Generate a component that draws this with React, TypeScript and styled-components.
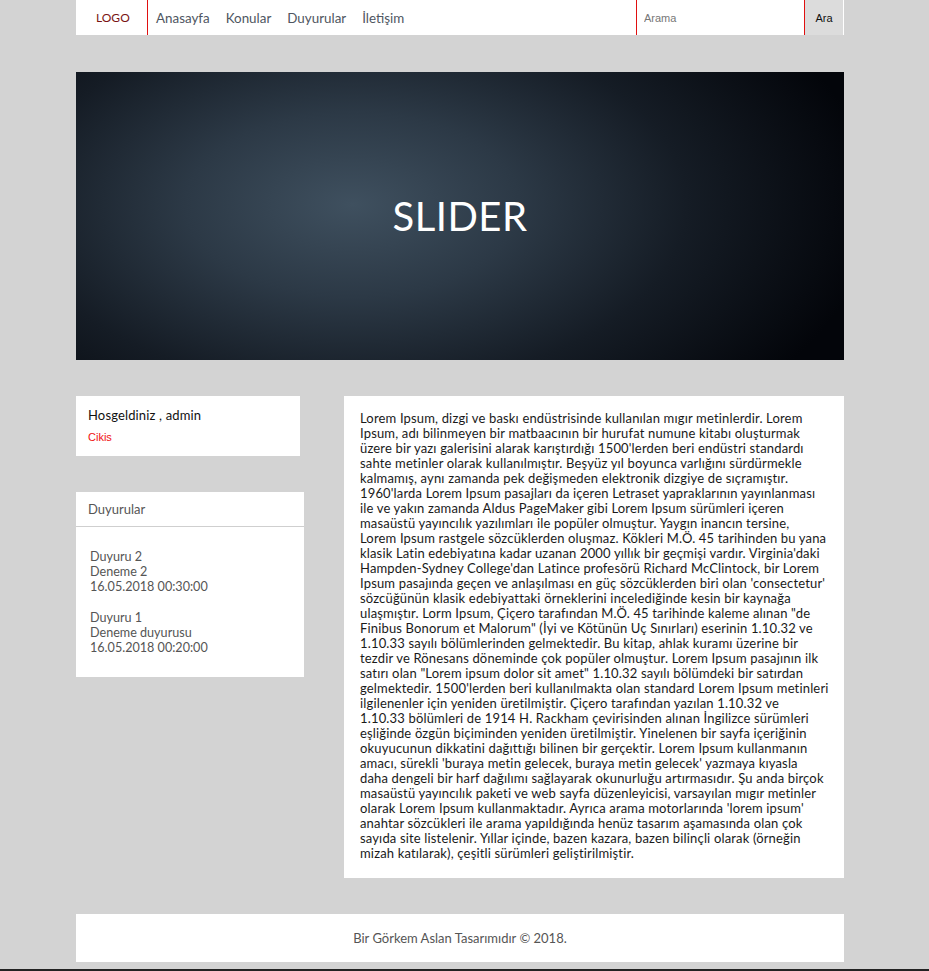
import React from "react";
import styled, { createGlobalStyle } from "styled-components";

const GlobalStyle = createGlobalStyle`
  html, body { margin: 0; padding: 0; }
  body {
    background: #d3d3d3;
    font-family: Lato, "Noto Sans", sans-serif;
    border-bottom: 2px solid #222;
  }
`;

const Page = styled.div`
  width: 768px;
  margin-left: 76px;
  display: flex;
  flex-direction: column;
  padding-bottom: 7px;
`;

const NavBar = styled.nav`
  height: 35px;
  background: #fff;
  display: flex;
  align-items: stretch;
`;

const Logo = styled.div`
  width: 72px;
  border-right: 1px solid #e01010;
  display: flex;
  align-items: center;
  padding-left: 20px;
  box-sizing: border-box;
  color: #7a1414;
  font-size: 12px;
`;

const Menu = styled.ul`
  list-style: none;
  margin: 0;
  padding: 0 0 0 8px;
  display: flex;
  align-items: center;
  gap: 16px;
  flex: 1;
`;

const MenuItem = styled.li`
  font-size: 13.4px;
  color: #4f5661;
`;

const SearchInput = styled.input`
  width: 169px;
  box-sizing: border-box;
  border: none;
  border-left: 1px solid #e01010;
  border-right: 1px solid #e01010;
  padding: 0 7px;
  font-family: "Liberation Sans", Arial, sans-serif;
  font-size: 11px;
  outline: none;
  &::placeholder { color: #777; }
`;

const SearchButton = styled.button`
  width: 39px;
  border: none;
  border-right: 1px solid #fff;
  background: #dcdcdc;
  font-family: "Liberation Sans", Arial, sans-serif;
  font-size: 11px;
  color: #111;
  padding: 0;
`;

const Slider = styled.div`
  margin-top: 37px;
  height: 288px;
  background: radial-gradient(ellipse 68% 100% at 36% 46%, #3f505f 0%, #2c3946 32%, #151c25 64%, #03050a 100%);
  display: flex;
  align-items: center;
  justify-content: center;
  color: #fff;
  font-size: 40px;
  letter-spacing: 0.5px;
`;

const Row = styled.div`
  margin-top: 36px;
  display: flex;
  align-items: flex-start;
  gap: 40px;
`;

const Sidebar = styled.aside`
  width: 228px;
  display: flex;
  flex-direction: column;
  gap: 36px;
`;

const WelcomeBox = styled.div`
  width: 224px;
  height: 60px;
  box-sizing: border-box;
  background: #fff;
  padding: 11px 12px;
`;

const WelcomeText = styled.div`
  font-size: 13px;
  color: #111;
  line-height: 16px;
  letter-spacing: 0.15px;
`;

const Logout = styled.a`
  display: block;
  margin-top: 8px;
  font-family: "Liberation Sans", Arial, sans-serif;
  font-size: 11px;
  color: #f01010;
  text-decoration: none;
`;

const Panel = styled.div`
  background: #fff;
`;

const PanelHeader = styled.div`
  height: 35px;
  box-sizing: border-box;
  border-bottom: 1px solid #cfcfcf;
  padding-left: 12px;
  display: flex;
  align-items: center;
  font-size: 13px;
  color: #555;
`;

const PanelBody = styled.div`
  padding: 22px 14px 22px;
  display: flex;
  flex-direction: column;
  gap: 16px;
`;

const NewsItem = styled.div`
  font-size: 12.6px;
  line-height: 15px;
  color: #555;
`;

const Content = styled.main`
  width: 500px;
  box-sizing: border-box;
  background: #fff;
  padding: 15px 16px 17px;
  font-size: 13px;
  line-height: 15px;
  letter-spacing: 0.16px;
  color: #1a1a1a;
  white-space: nowrap;
`;

const lines = [
  "Lorem Ipsum, dizgi ve baskı endüstrisinde kullanılan mıgır metinlerdir. Lorem",
  "Ipsum, adı bilinmeyen bir matbaacının bir hurufat numune kitabı oluşturmak",
  "üzere bir yazı galerisini alarak karıştırdığı 1500'lerden beri endüstri standardı",
  "sahte metinler olarak kullanılmıştır. Beşyüz yıl boyunca varlığını sürdürmekle",
  "kalmamış, aynı zamanda pek değişmeden elektronik dizgiye de sıçramıştır.",
  "1960'larda Lorem Ipsum pasajları da içeren Letraset yapraklarının yayınlanması",
  "ile ve yakın zamanda Aldus PageMaker gibi Lorem Ipsum sürümleri içeren",
  "masaüstü yayıncılık yazılımları ile popüler olmuştur. Yaygın inancın tersine,",
  "Lorem Ipsum rastgele sözcüklerden oluşmaz. Kökleri M.Ö. 45 tarihinden bu yana",
  "klasik Latin edebiyatına kadar uzanan 2000 yıllık bir geçmişi vardır. Virginia'daki",
  "Hampden-Sydney College'dan Latince profesörü Richard McClintock, bir Lorem",
  "Ipsum pasajında geçen ve anlaşılması en güç sözcüklerden biri olan 'consectetur'",
  "sözcüğünün klasik edebiyattaki örneklerini incelediğinde kesin bir kaynağa",
  "ulaşmıştır. Lorm Ipsum, Çiçero tarafından M.Ö. 45 tarihinde kaleme alınan \"de",
  "Finibus Bonorum et Malorum\" (İyi ve Kötünün Uç Sınırları) eserinin 1.10.32 ve",
  "1.10.33 sayılı bölümlerinden gelmektedir. Bu kitap, ahlak kuramı üzerine bir",
  "tezdir ve Rönesans döneminde çok popüler olmuştur. Lorem Ipsum pasajının ilk",
  "satırı olan \"Lorem ipsum dolor sit amet\" 1.10.32 sayılı bölümdeki bir satırdan",
  "gelmektedir. 1500'lerden beri kullanılmakta olan standard Lorem Ipsum metinleri",
  "ilgilenenler için yeniden üretilmiştir. Çiçero tarafından yazılan 1.10.32 ve",
  "1.10.33 bölümleri de 1914 H. Rackham çevirisinden alınan İngilizce sürümleri",
  "eşliğinde özgün biçiminden yeniden üretilmiştir. Yinelenen bir sayfa içeriğinin",
  "okuyucunun dikkatini dağıttığı bilinen bir gerçektir. Lorem Ipsum kullanmanın",
  "amacı, sürekli 'buraya metin gelecek, buraya metin gelecek' yazmaya kıyasla",
  "daha dengeli bir harf dağılımı sağlayarak okunurluğu artırmasıdır. Şu anda birçok",
  "masaüstü yayıncılık paketi ve web sayfa düzenleyicisi, varsayılan mıgır metinler",
  "olarak Lorem Ipsum kullanmaktadır. Ayrıca arama motorlarında 'lorem ipsum'",
  "anahtar sözcükleri ile arama yapıldığında henüz tasarım aşamasında olan çok",
  "sayıda site listelenir. Yıllar içinde, bazen kazara, bazen bilinçli olarak (örneğin",
  "mizah katılarak), çeşitli sürümleri geliştirilmiştir.",
];

const Footer = styled.footer`
  margin-top: 36px;
  height: 48px;
  background: #fff;
  display: flex;
  align-items: center;
  justify-content: center;
  font-size: 13px;
  color: #555;
`;

const news = [
  { title: "Duyuru 2", body: "Deneme 2", date: "16.05.2018 00:30:00" },
  { title: "Duyuru 1", body: "Deneme duyurusu", date: "16.05.2018 00:20:00" },
];

export default function App() {
  return (
    <>
      <GlobalStyle />
      <Page>
        <NavBar>
          <Logo>LOGO</Logo>
          <Menu>
            <MenuItem>Anasayfa</MenuItem>
            <MenuItem>Konular</MenuItem>
            <MenuItem>Duyurular</MenuItem>
            <MenuItem>İletişim</MenuItem>
          </Menu>
          <SearchInput placeholder="Arama" />
          <SearchButton>Ara</SearchButton>
        </NavBar>
        <Slider>SLIDER</Slider>
        <Row>
          <Sidebar>
            <WelcomeBox>
              <WelcomeText>Hosgeldiniz , admin</WelcomeText>
              <Logout href="#">Cikis</Logout>
            </WelcomeBox>
            <Panel>
              <PanelHeader>Duyurular</PanelHeader>
              <PanelBody>
                {news.map((n) => (
                  <NewsItem key={n.title}>
                    {n.title}
                    <br />
                    {n.body}
                    <br />
                    {n.date}
                  </NewsItem>
                ))}
              </PanelBody>
            </Panel>
          </Sidebar>
          <Content>
            {lines.map((l, i) => (
              <React.Fragment key={i}>
                {l}
                {i < lines.length - 1 && <br />}
              </React.Fragment>
            ))}
          </Content>
        </Row>
        <Footer>Bir Görkem Aslan Tasarımıdır © 2018.</Footer>
      </Page>
    </>
  );
}
